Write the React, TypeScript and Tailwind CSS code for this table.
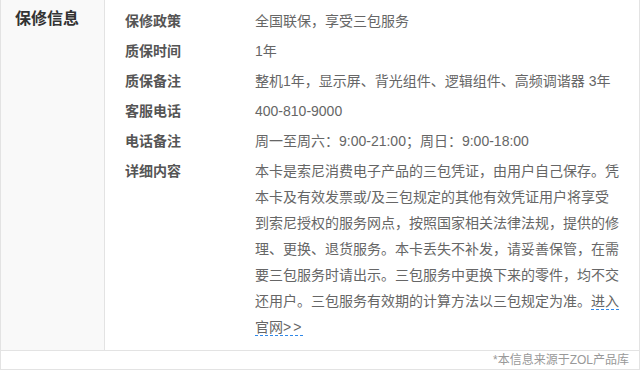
const rows = [
	{ label: "保修政策", value: "全国联保，享受三包服务" },
	{ label: "质保时间", value: "1年" },
	{ label: "质保备注", value: "整机1年，显示屏、背光组件、逻辑组件、高频调谐器 3年" },
	{ label: "客服电话", value: "400-810-9000" },
	{ label: "电话备注", value: "周一至周六：9:00-21:00；周日：9:00-18:00" },
];

export default function App() {
	return (
		<div className="w-[640px] bg-white font-['Liberation_Sans','Noto_Sans_CJK_SC',sans-serif]">
			<div className="border-x border-b border-[#e3e3e3]">
				<div className="flex border-b border-[#e3e3e3]">
					<div className="w-[104px] shrink-0 border-r border-[#e3e3e3] bg-[#f9f9f9] pl-[14px] pt-[4px]">
						<h3 className="text-base font-bold leading-[30px] text-[#333]">保修信息</h3>
					</div>
					<div className="pl-5 pt-[6px] pb-[10px] text-sm">
						{rows.map((row) => (
							<div key={row.label} className="flex leading-[30px]">
								<div className="w-[130px] shrink-0 font-bold text-[#555]">{row.label}</div>
								<div className="text-[#666]">{row.value}</div>
							</div>
						))}
						<div className="flex pt-[2px] leading-[26px]">
							<div className="w-[130px] shrink-0 font-bold text-[#555]">详细内容</div>
							<p className="w-[366px] text-[#666]">
								本卡是索尼消费电子产品的三包凭证，由用户自己保存。凭本卡及有效发票或/及三包规定的其他有效凭证用户将享受到索尼授权的服务网点，按照国家相关法律法规，提供的修理、更换、退货服务。本卡丢失不补发，请妥善保管，在需要三包服务时请出示。三包服务中更换下来的零件，均不交还用户。三包服务有效期的计算方法以三包规定为准。
								<a href="#" className="border-b border-dashed border-[#2f88e8] text-[#666]">
									进入官网<span className="tracking-[2px]">&gt;&gt;</span>
								</a>
							</p>
						</div>
					</div>
				</div>
				<div className="h-[18px] pr-[10px] text-right text-xs leading-[18px] text-[#999]">
					*本信息来源于ZOL产品库
				</div>
			</div>
		</div>
	);
}
